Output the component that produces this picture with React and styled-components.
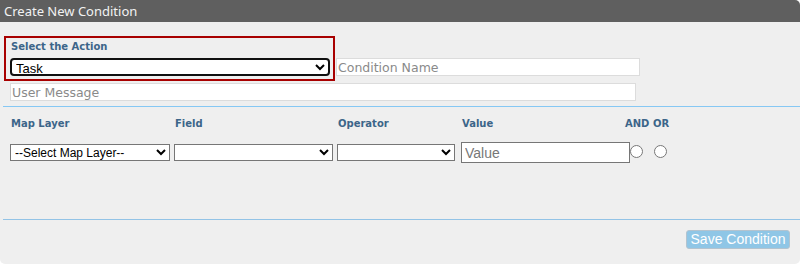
import React from 'react';
import styled, { createGlobalStyle } from 'styled-components';

const GlobalStyle = createGlobalStyle`
  html, body {
    margin: 0;
    padding: 0;
    background: #ffffff;
  }
`;

const Panel = styled.div`
  width: 800px;
  height: 264px;
  background: #efefef;
  border-radius: 0 5px 5px 5px;
  overflow: hidden;
  display: flex;
  flex-direction: column;
  font-family: "DejaVu Sans", Verdana, sans-serif;
`;

const Header = styled.div`
  height: 22px;
  background: #5f5f5f;
  color: #f2f2f2;
  font-family: "Noto Sans", "DejaVu Sans", sans-serif;
  font-size: 13px;
  line-height: 22px;
  padding-left: 4px;
`;

const Body = styled.div`
  flex: 1;
  display: flex;
  flex-direction: column;
  padding: 14px 0 0 3px;
`;

const TopRow = styled.div`
  display: flex;
  align-items: flex-end;
`;

const ActionBox = styled.div`
  box-sizing: border-box;
  width: 331px;
  height: 45px;
  margin-left: 1px;
  border: 2px solid #a80000;
  padding: 2px 4px 0 4px;
  display: flex;
  flex-direction: column;
`;

const Label = styled.div`
  color: #3c6589;
  font-family: "DejaVu Sans", Verdana, sans-serif;
  font-weight: bold;
  font-size: 10px;
  line-height: 14px;
  padding-left: ${({ indent }) => indent || 0}px;
`;

const ActionSelect = styled.select`
  box-sizing: border-box;
  width: 320px;
  height: 18px;
  margin-top: 4px;
  border: 2px solid #101010;
  border-radius: 4px;
  outline: none;
  background: #ffffff;
  color: #000;
  font-family: "Liberation Sans", Arial, sans-serif;
  font-size: 13px;
  padding: 0;
`;

const TextField = styled.input`
  box-sizing: border-box;
  width: ${({ width }) => width}px;
  height: 18px;
  border: 1px solid #dcdcdc;
  background: #ffffff;
  padding: 0 1px;
  font-family: "DejaVu Sans", Verdana, sans-serif;
  font-size: 12.5px;
  outline: none;
  &::placeholder {
    color: #8a8a8a;
  }
`;

const NameField = styled(TextField)`
  margin: 0 0 5px 1px;
`;

const MessageField = styled(TextField)`
  margin: 2px 0 0 7px;
`;

const Divider = styled.div`
  height: 1px;
  background: ${({ color }) => color};
  margin-top: ${({ top }) => top}px;
`;

const Grid = styled.div`
  display: grid;
  grid-template-columns: 164px 163px 124px 164px 1fr;
  margin-left: 7px;
`;

const HeadCell = styled.div`
  padding-top: 10px;
  height: 25px;
  margin-left: ${({ shift }) => shift || 1}px;
`;

const ControlCell = styled.div`
  display: flex;
  align-items: center;
  height: 21px;
`;

const Dropdown = styled.select`
  box-sizing: border-box;
  width: ${({ width }) => width}px;
  height: 17px;
  border: 1px solid #767676;
  border-radius: 0;
  background: #ffffff;
  color: #000;
  font-family: "Liberation Sans", Arial, sans-serif;
  font-size: 12px;
  padding: 0;
  outline: none;
`;

const ValueField = styled.input`
  box-sizing: border-box;
  width: 169px;
  height: 21px;
  border: 1px solid #767676;
  background: #ffffff;
  padding: 0 3px;
  font-family: "Liberation Sans", Arial, sans-serif;
  font-size: 14px;
  outline: none;
  &::placeholder {
    color: #777;
  }
`;

const Radio = styled.input`
  width: 13px;
  height: 13px;
  margin: 0 ${({ gap }) => gap}px 0 0;
`;

const RadioGroup = styled.div`
  display: flex;
  align-items: center;
  margin: -3px 0 0 5px;
`;

const Footer = styled.div`
  display: flex;
  justify-content: flex-end;
  padding: 10px 10px 0 0;
`;

const SaveButton = styled.button`
  box-sizing: border-box;
  width: 104px;
  height: 19px;
  background: #8fc6e6;
  border: 1px solid #b3c3cf;
  border-radius: 3px;
  color: #ffffff;
  font-family: "Liberation Sans", Arial, sans-serif;
  font-size: 14px;
  padding: 0;
  line-height: 17px;
`;

export default function App() {
  return (
    <>
      <GlobalStyle />
      <Panel>
        <Header>Create New Condition</Header>
        <Body>
          <TopRow>
            <ActionBox>
              <Label indent={1}>Select the Action</Label>
              <ActionSelect defaultValue="Task">
                <option>Task</option>
              </ActionSelect>
            </ActionBox>
            <NameField width={304} placeholder="Condition Name" />
          </TopRow>
          <MessageField width={626} placeholder="User Message" />
          <Divider color="#86c8f4" top={5} />
          <Grid>
            <HeadCell><Label>Map Layer</Label></HeadCell>
            <HeadCell><Label>Field</Label></HeadCell>
            <HeadCell><Label>Operator</Label></HeadCell>
            <HeadCell shift={0}><Label>Value</Label></HeadCell>
            <HeadCell shift={-0.01}><Label>AND OR</Label></HeadCell>
            <ControlCell>
              <Dropdown width={160} defaultValue="">
                <option value="">--Select Map Layer--</option>
              </Dropdown>
            </ControlCell>
            <ControlCell>
              <Dropdown width={159}><option></option></Dropdown>
            </ControlCell>
            <ControlCell>
              <Dropdown width={118}><option></option></Dropdown>
            </ControlCell>
            <ControlCell>
              <ValueField placeholder="Value" />
            </ControlCell>
            <ControlCell>
              <RadioGroup>
                <Radio type="radio" name="logic" gap={11} />
                <Radio type="radio" name="logic" gap={0} />
              </RadioGroup>
            </ControlCell>
          </Grid>
          <Divider color="#93c3e6" top={56} />
          <Footer>
            <SaveButton>Save Condition</SaveButton>
          </Footer>
        </Body>
      </Panel>
    </>
  );
}
